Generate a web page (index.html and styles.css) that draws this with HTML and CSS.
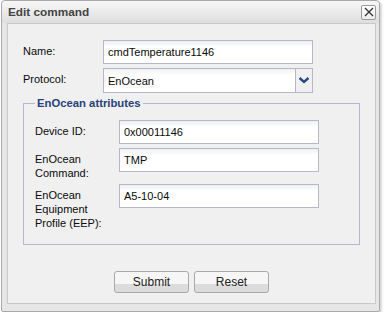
FILE: index.html
```html
<!DOCTYPE html>
<html lang="en">
<head>
    <meta charset="UTF-8">
    <title>Edit command</title>
    <link rel="stylesheet" href="styles.css">
</head>
<body>
    <div class="dialog">
        <div class="titlebar">
            <span class="title">Edit command</span>
            <span class="close">
                <svg width="10" height="10" viewBox="0 0 10 10"><path d="M1 1L9 9M9 1L1 9" stroke="#333" stroke-width="1.3"/></svg>
            </span>
        </div>

        <div class="panel">
            <div class="form-row">
                <label for="name">Name:</label>
                <input type="text" id="name" class="wide" value="cmdTemperature1146">
            </div>
            <div class="form-row">
                <label for="protocol">Protocol:</label>
                <div class="select wide">
                    <span>EnOcean</span>
                    <span class="arrow">
                        <svg width="10" height="7" viewBox="0 0 10 7"><path d="M0.5 1L5 5L9.5 1" fill="none" stroke="#2b4a86" stroke-width="2.4"/></svg>
                    </span>
                </div>
            </div>

            <!-- protocol specific fields -->
            <fieldset>
                <legend>EnOcean attributes</legend>
                <div class="form-row sub">
                    <label for="deviceId">Device ID:</label>
                    <input type="text" id="deviceId" value="0x00011146">
                </div>
                <div class="form-row sub">
                    <label for="command">EnOcean Command:</label>
                    <input type="text" id="command" value="TMP">
                </div>
                <div class="form-row sub">
                    <label for="eep">EnOcean Equipment Profile (EEP):</label>
                    <input type="text" id="eep" value="A5-10-04">
                </div>
            </fieldset>

            <div class="buttons">
                <button>Submit</button>
                <button>Reset</button>
            </div>
        </div>
    </div>
</body>
</html>
```

FILE: styles.css
```css
body {
    margin: 0;
    background: #fff;
    font-family: "Liberation Sans", Tahoma, sans-serif;
    font-size: 11px;
    color: #0a0a0a;
}
.dialog {
    width: 377px;
    height: 310px;
    margin-left: 1px;
    border: 1px solid #a9a9a9;
    border-radius: 4px 4px 2px 2px;
    background: #e6e6e6;
    box-shadow: 2px 2px 2px rgba(0, 0, 0, 0.15);
}
.titlebar {
    height: 22px;
    display: flex;
    align-items: center;
    justify-content: space-between;
    padding: 0 3px 0 6px;
    background: linear-gradient(#f7f7f7, #dedede);
    border-radius: 4px 4px 0 0;
}
.title {
    font-weight: bold;
    font-size: 11.8px;
    color: #444;
}
.close {
    width: 13px;
    height: 13px;
    display: flex;
    align-items: center;
    justify-content: center;
    border: 1px solid #9a9a9a;
    border-radius: 2px;
    background: linear-gradient(#fff, #ececec);
}
.panel {
    margin: 0 3px 0 5px;
    height: 281px;
    box-sizing: border-box;
    border: 1px solid #c9c9c9;
    background: #f0f0f0;
    padding: 16px 15px 0 15px;
}
.form-row {
    display: grid;
    grid-template-columns: 80px auto;
    align-items: start;
    margin-bottom: 4px;
}
.form-row label {
    padding-top: 4px;
    line-height: 14px;
}
.form-row.sub {
    grid-template-columns: 84px auto;
}
input, .select {
    height: 24px;
    box-sizing: border-box;
    border: 1px solid #b7b7c9;
    background: linear-gradient(#eef0f4, #fff 6px);
    font: inherit;
    color: #0a0a0a;
    padding: 0 4px;
    margin: 0;
    width: 200px;
}
.wide {
    width: 210px;
}
.select {
    height: 25px;
    display: flex;
    align-items: center;
    justify-content: space-between;
    padding-right: 0;
}
.arrow {
    width: 16px;
    height: 23px;
    display: flex;
    align-items: center;
    justify-content: center;
    border-left: 1px solid #b7b7c9;
    background: #f0f0f0;
}
fieldset {
    margin: 2px 0 0 0;
    padding: 11px 11px 9px 11px;
    border: 1px solid #b7b7cf;
    height: 148px;
    box-sizing: border-box;
}
legend {
    padding: 0 2px;
    font-weight: bold;
    font-size: 11.3px;
    color: #27427a;
}
.buttons {
    display: flex;
    justify-content: center;
    gap: 5px;
    margin-top: 26px;
}
button {
    width: 75px;
    height: 22px;
    border: 1px solid #a9a9a9;
    border-radius: 3px;
    background: linear-gradient(#f6f6f6 62%, #dcdcdc 62%);
    font-family: "Liberation Sans", Arial, sans-serif;
    font-size: 12px;
    color: #222;
    padding: 0;
}
```
